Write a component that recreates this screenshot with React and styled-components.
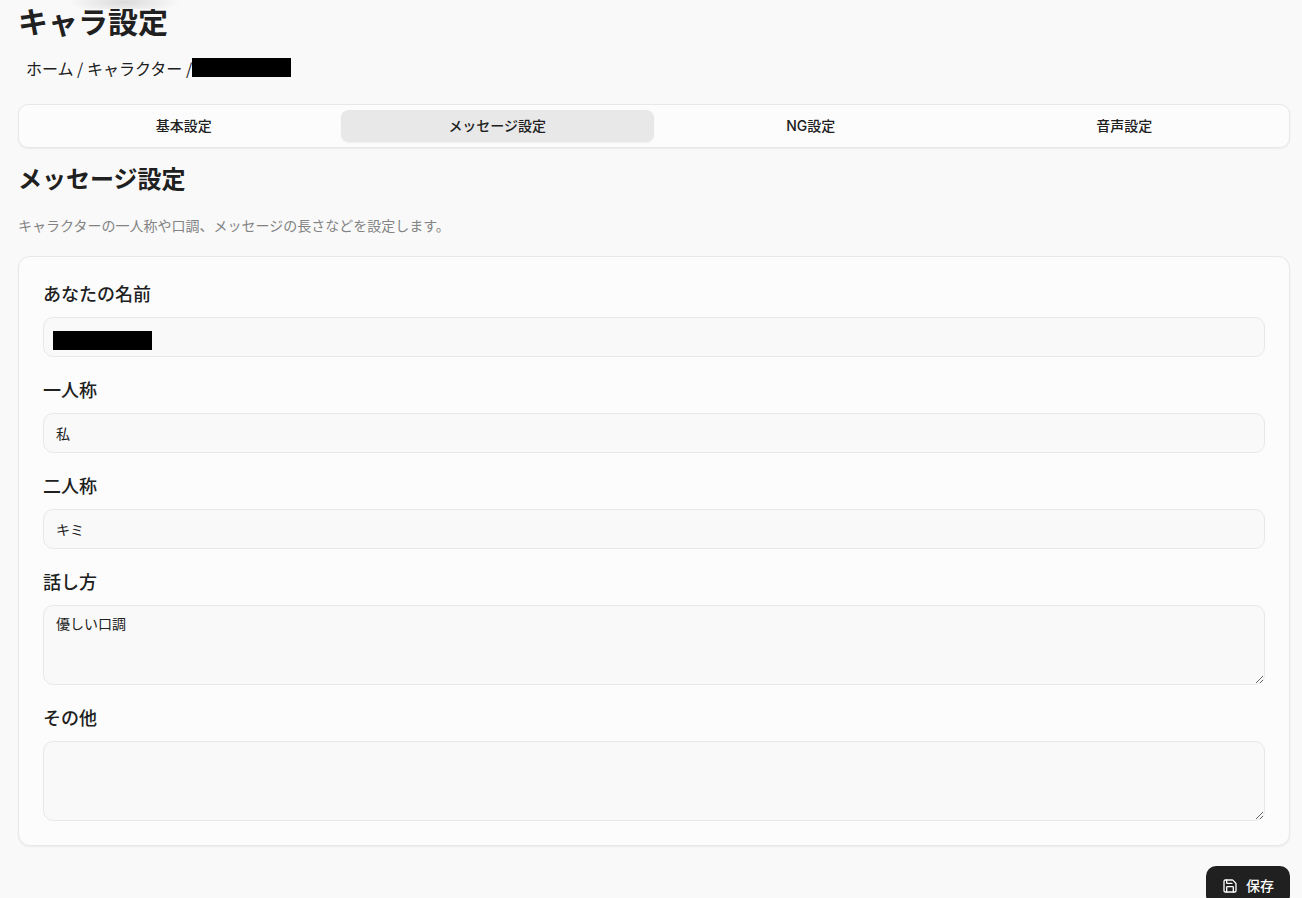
import { Save } from "lucide-react";
import React, { useState } from "react";
import styled, { createGlobalStyle } from "styled-components";

const GlobalStyle = createGlobalStyle`
  *,
  *::before,
  *::after {
    box-sizing: border-box;
  }

  html {
    scrollbar-width: none;
  }

  body {
    background: #f9f9f9;
    color: #202020;
    font-family: Inter, "Noto Sans CJK JP", sans-serif;
    font-size: 14px;
    line-height: 20px;
    margin: 0;
  }

  h1,
  h2,
  p {
    margin: 0;
  }

  button,
  input,
  textarea {
    color: inherit;
    font: inherit;
  }
`;

const TopBar = styled.div`
  background: radial-gradient(
      ellipse 56px 12px at 124px 2px,
      rgba(0, 0, 0, 0.12),
      transparent
    )
    #f9f9f9;
  height: 9px;
  left: 0;
  position: fixed;
  right: 0;
  top: 0;
  z-index: 1;
`;

const Page = styled.main`
  display: flex;
  flex-direction: column;
  padding: 4px 12px 16px 18px;
`;

const Title = styled.h1`
  font-size: 30px;
  font-weight: 600;
  line-height: 36px;
`;

const Breadcrumb = styled.nav`
  align-items: flex-start;
  display: flex;
  font-family: "Noto Sans CJK JP", sans-serif;
  font-size: 16px;
  line-height: 24px;
  margin-top: 16px;
  padding-left: 8px;
  white-space: pre;

  a {
    color: inherit;
    text-decoration: none;
  }
`;

const Redacted = styled.span`
  background: #000;
  height: 19px;
  margin-top: 2px;
  width: 99px;
`;

const Tabs = styled.div`
  background: #fcfcfc;
  border: 1px solid #e8e8e8;
  border-radius: 10px;
  box-shadow: 0 1px 2px rgba(0, 0, 0, 0.06);
  display: grid;
  grid-template-columns: repeat(4, 1fr);
  margin-top: 24px;
  padding: 5px 8px;
`;

const Tab = styled.button`
  background: ${props => (props.$active ? "#e8e8e8" : "transparent")};
  border: 0;
  border-radius: 8px;
  box-shadow: ${props =>
    props.$active ? "0 1px 2px rgba(0, 0, 0, 0.06)" : "none"};
  cursor: pointer;
  font-weight: 500;
  height: 32px;
  padding: 0 12px;
`;

const Heading = styled.h2`
  font-size: 24px;
  font-weight: 600;
  line-height: 32px;
  margin-top: 16px;
`;

const Description = styled.p`
  color: #838383;
  margin-top: 20px;
`;

const Card = styled.section`
  background: #fcfcfc;
  border: 1px solid #e8e8e8;
  border-radius: 12px;
  box-shadow: 0 1px 2px rgba(0, 0, 0, 0.06);
  display: flex;
  flex-direction: column;
  gap: 20px;
  margin-top: 20px;
  padding: 24px;
`;

const Field = styled.div`
  display: flex;
  flex-direction: column;
  gap: 8px;
`;

const Label = styled.label`
  font-size: 18px;
  font-weight: 500;
  line-height: 28px;
`;

const Control = styled.input`
  background: #f9f9f9;
  border: 1px solid #e8e8e8;
  border-radius: 10px;
  height: 40px;
  outline: none;
  padding: 8px 12px;
  width: 100%;
`;

const TextArea = styled(Control).attrs({ as: "textarea" })`
  display: block;
  height: 80px;
  resize: vertical;
`;

const MaskedInput = styled.div`
  align-items: center;
  display: grid;

  > * {
    grid-area: 1 / 1;
  }

  ${Redacted} {
    margin: 6px 0 0 10px;
  }
`;

const SaveButton = styled.button`
  align-items: center;
  align-self: flex-end;
  background: #202020;
  border: 0;
  border-radius: 10px;
  color: #fcfcfc;
  cursor: pointer;
  display: flex;
  font-weight: 500;
  gap: 8px;
  height: 40px;
  margin-top: 20px;
  padding: 0 16px;
`;

const TABS = ["基本設定", "メッセージ設定", "NG設定", "音声設定"];

const App = () => {
  const [active, setActive] = useState(TABS[1]);

  return (
    <>
      <GlobalStyle />
      <TopBar />
      <Page>
        <Title>キャラ設定</Title>
        <Breadcrumb>
          <a href="#home">ホーム</a>
          {" / "}
          <a href="#characters">キャラクター</a>
          {" /"}
          <Redacted />
        </Breadcrumb>

        <Tabs role="tablist">
          {TABS.map(tab => (
            <Tab
              key={tab}
              type="button"
              role="tab"
              aria-selected={tab === active}
              $active={tab === active}
              onClick={() => setActive(tab)}
            >
              {tab}
            </Tab>
          ))}
        </Tabs>

        <Heading>メッセージ設定</Heading>
        <Description>
          キャラクターの一人称や口調、メッセージの長さなどを設定します。
        </Description>

        <Card>
          <Field>
            <Label htmlFor="user-name">あなたの名前</Label>
            <MaskedInput>
              <Control id="user-name" />
              <Redacted />
            </MaskedInput>
          </Field>
          <Field>
            <Label htmlFor="first-person">一人称</Label>
            <Control id="first-person" defaultValue="私" />
          </Field>
          <Field>
            <Label htmlFor="second-person">二人称</Label>
            <Control id="second-person" defaultValue="キミ" />
          </Field>
          <Field>
            <Label htmlFor="tone">話し方</Label>
            <TextArea id="tone" defaultValue="優しい口調" />
          </Field>
          <Field>
            <Label htmlFor="others">その他</Label>
            <TextArea id="others" />
          </Field>
        </Card>

        <SaveButton type="button">
          <Save size={16} aria-hidden="true" />
          保存
        </SaveButton>
      </Page>
    </>
  );
};

export default App;
